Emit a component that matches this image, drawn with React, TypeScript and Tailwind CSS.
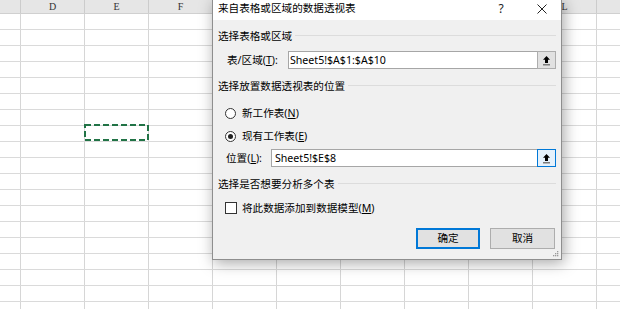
import React from "react";

// only the letters that show past the dialog; the rest sit underneath it
const cols = ["D", "E", "F", "", "", "", "", "", "L", ""];
const rows = Array.from({ length: 19 }, (_, i) => i);

const U = ({ children }: { children: React.ReactNode }) => (
  <span className="underline underline-offset-[1px]">{children}</span>
);

const UploadButton = ({ focused }: { focused?: boolean }) => (
  <div
    className={`-ml-px flex h-[18px] w-[19px] shrink-0 items-center justify-center border ${
      focused ? "border-[#0078d7] bg-[#e5f1fb]" : "border-[#adadad] bg-[#e1e1e1]"
    }`}
  >
    <svg width="11" height="11" viewBox="0 0 11 11">
      <path d="M5.5 1 L9 4.8 H7 V8 H4 V4.8 H2 Z" fill="#000" />
      <rect x="2" y="9" width="7" height="1.5" fill="#7a7a7a" />
    </svg>
  </div>
);

const SectionLabel = ({ text }: { text: string }) => (
  <div className="flex h-[20px] items-center">
    <span>{text}</span>
    <div className="ml-[3px] mt-[-1px] h-px flex-1 bg-[#dcdcdc]" />
  </div>
);

const Radio = ({ checked, children }: { checked?: boolean; children: React.ReactNode }) => (
  <div className="flex h-[18px] items-center gap-[6px] pl-[7px]">
    <span className="flex h-[11px] w-[11px] items-center justify-center rounded-full border border-[#333] bg-white">
      {checked && <span className="h-[5px] w-[5px] rounded-full bg-[#222]" />}
    </span>
    <span>{children}</span>
  </div>
);

const Sheet = () => (
  <div className="flex flex-col">
    <div className="flex h-[14px] border-b border-[#d0d0d0] bg-[#e6e6e6] font-['Liberation_Serif',serif] text-[10px] leading-[13px] text-[#333]">
      <div className="w-[21px] shrink-0 border-r border-[#cccccc]" />
      {cols.map((c, i) => (
        <div key={i} className="w-[64px] shrink-0 border-r border-[#cccccc] text-center">
          {c}
        </div>
      ))}
    </div>
    {rows.map((r) => (
      <div key={r} className="flex h-[16px] border-b border-[#dadada] bg-white">
        <div className="w-[21px] shrink-0 border-r border-[#d6d6d6]" />
        {cols.map((c, i) => (
          <div key={i} className="w-[64px] shrink-0 border-r border-[#d6d6d6]" />
        ))}
      </div>
    ))}
  </div>
);

const Dialog = () => (
  <div className="absolute left-[212px] top-[-1px] flex h-[261px] w-[350px] flex-col border border-[#8e8e8e] bg-[#f0f0f0] font-['Noto_Sans','Noto_Sans_CJK_SC',sans-serif] text-[10.6px] leading-none text-black shadow-[2px_3px_14px_rgba(0,0,0,0.35)]">
    <div className="flex h-[20px] shrink-0 bg-white">
      <div className="flex h-[17px] flex-1 items-center pl-[5px]">来自表格或区域的数据透视表</div>
      <div className="flex h-[17px] items-center gap-[11px] pr-[4px]">
        <span className="w-[30px] text-center text-[12px] text-[#222]">?</span>
        <span className="flex w-[30px] justify-center">
          <svg width="10" height="10" viewBox="0 0 10 10">
            <path d="M0.5 0.5 L9.5 9.5 M9.5 0.5 L0.5 9.5" stroke="#222" strokeWidth="1" />
          </svg>
        </span>
      </div>
    </div>

    <div className="relative flex flex-1 flex-col px-[5px] pt-[6px]">
      <SectionLabel text="选择表格或区域" />

      <div className="mt-[5px] flex h-[18px] items-center pl-[9px]">
        <span className="w-[61px] shrink-0">
          表/区域(<U>T</U>):
        </span>
        <div className="flex h-full flex-1 items-center border border-[#a6a6a6] bg-white pl-px">
          Sheet5!$A$1:$A$10
        </div>
        <UploadButton />
      </div>

      <div className="mt-[7px]">
        <SectionLabel text="选择放置数据透视表的位置" />
      </div>

      <div className="mt-[8px]">
        <Radio>
          新工作表(<U>N</U>)
        </Radio>
      </div>
      <div className="mt-[5px]">
        <Radio checked>
          现有工作表(<U>E</U>)
        </Radio>
      </div>

      <div className="mt-[4px] flex h-[18px] items-center pl-[8px]">
        <span className="w-[45px] shrink-0">
          位置(<U>L</U>):
        </span>
        <div className="flex h-full flex-1 items-center border border-[#a6a6a6] bg-white pl-[3px]">
          Sheet5!$E$8
        </div>
        <UploadButton focused />
      </div>

      <div className="mt-[7px]">
        <SectionLabel text="选择是否想要分析多个表" />
      </div>

      <div className="mt-[5px] flex h-[18px] items-center gap-[5px] pl-[7px]">
        <span className="h-[12px] w-[12px] border border-[#333] bg-white" />
        <span>
          将此数据添加到数据模型(<U>M</U>)
        </span>
      </div>

      <div className="mt-[11px] flex justify-end gap-[10px] pr-px">
        <button className="flex h-[21px] w-[64px] items-center justify-center border-2 border-[#0078d7] bg-[#e1e1e1]">
          确定
        </button>
        <button className="flex h-[21px] w-[65px] items-center justify-center border border-[#adadad] bg-[#e1e1e1]">
          取消
        </button>
      </div>

      <svg className="absolute bottom-[2px] right-[2px]" width="7" height="7" viewBox="0 0 7 7">
        <rect x="5" y="1" width="1.3" height="1.3" fill="#9a9a9a" />
        <rect x="3" y="3" width="1.3" height="1.3" fill="#9a9a9a" />
        <rect x="5" y="3" width="1.3" height="1.3" fill="#9a9a9a" />
        <rect x="1" y="5" width="1.3" height="1.3" fill="#9a9a9a" />
        <rect x="3" y="5" width="1.3" height="1.3" fill="#9a9a9a" />
        <rect x="5" y="5" width="1.3" height="1.3" fill="#9a9a9a" />
      </svg>
    </div>
  </div>
);

export default function App() {
  return (
    <div className="relative h-[309px] w-[620px] overflow-hidden bg-white">
      <Sheet />
      <svg className="absolute left-[84px] top-[124px]" width="65" height="17" viewBox="0 0 65 17">
        <rect x="1" y="1" width="63" height="15" fill="none" stroke="#217346" strokeWidth="2" strokeDasharray="6 3" />
      </svg>
      <Dialog />
    </div>
  );
}
